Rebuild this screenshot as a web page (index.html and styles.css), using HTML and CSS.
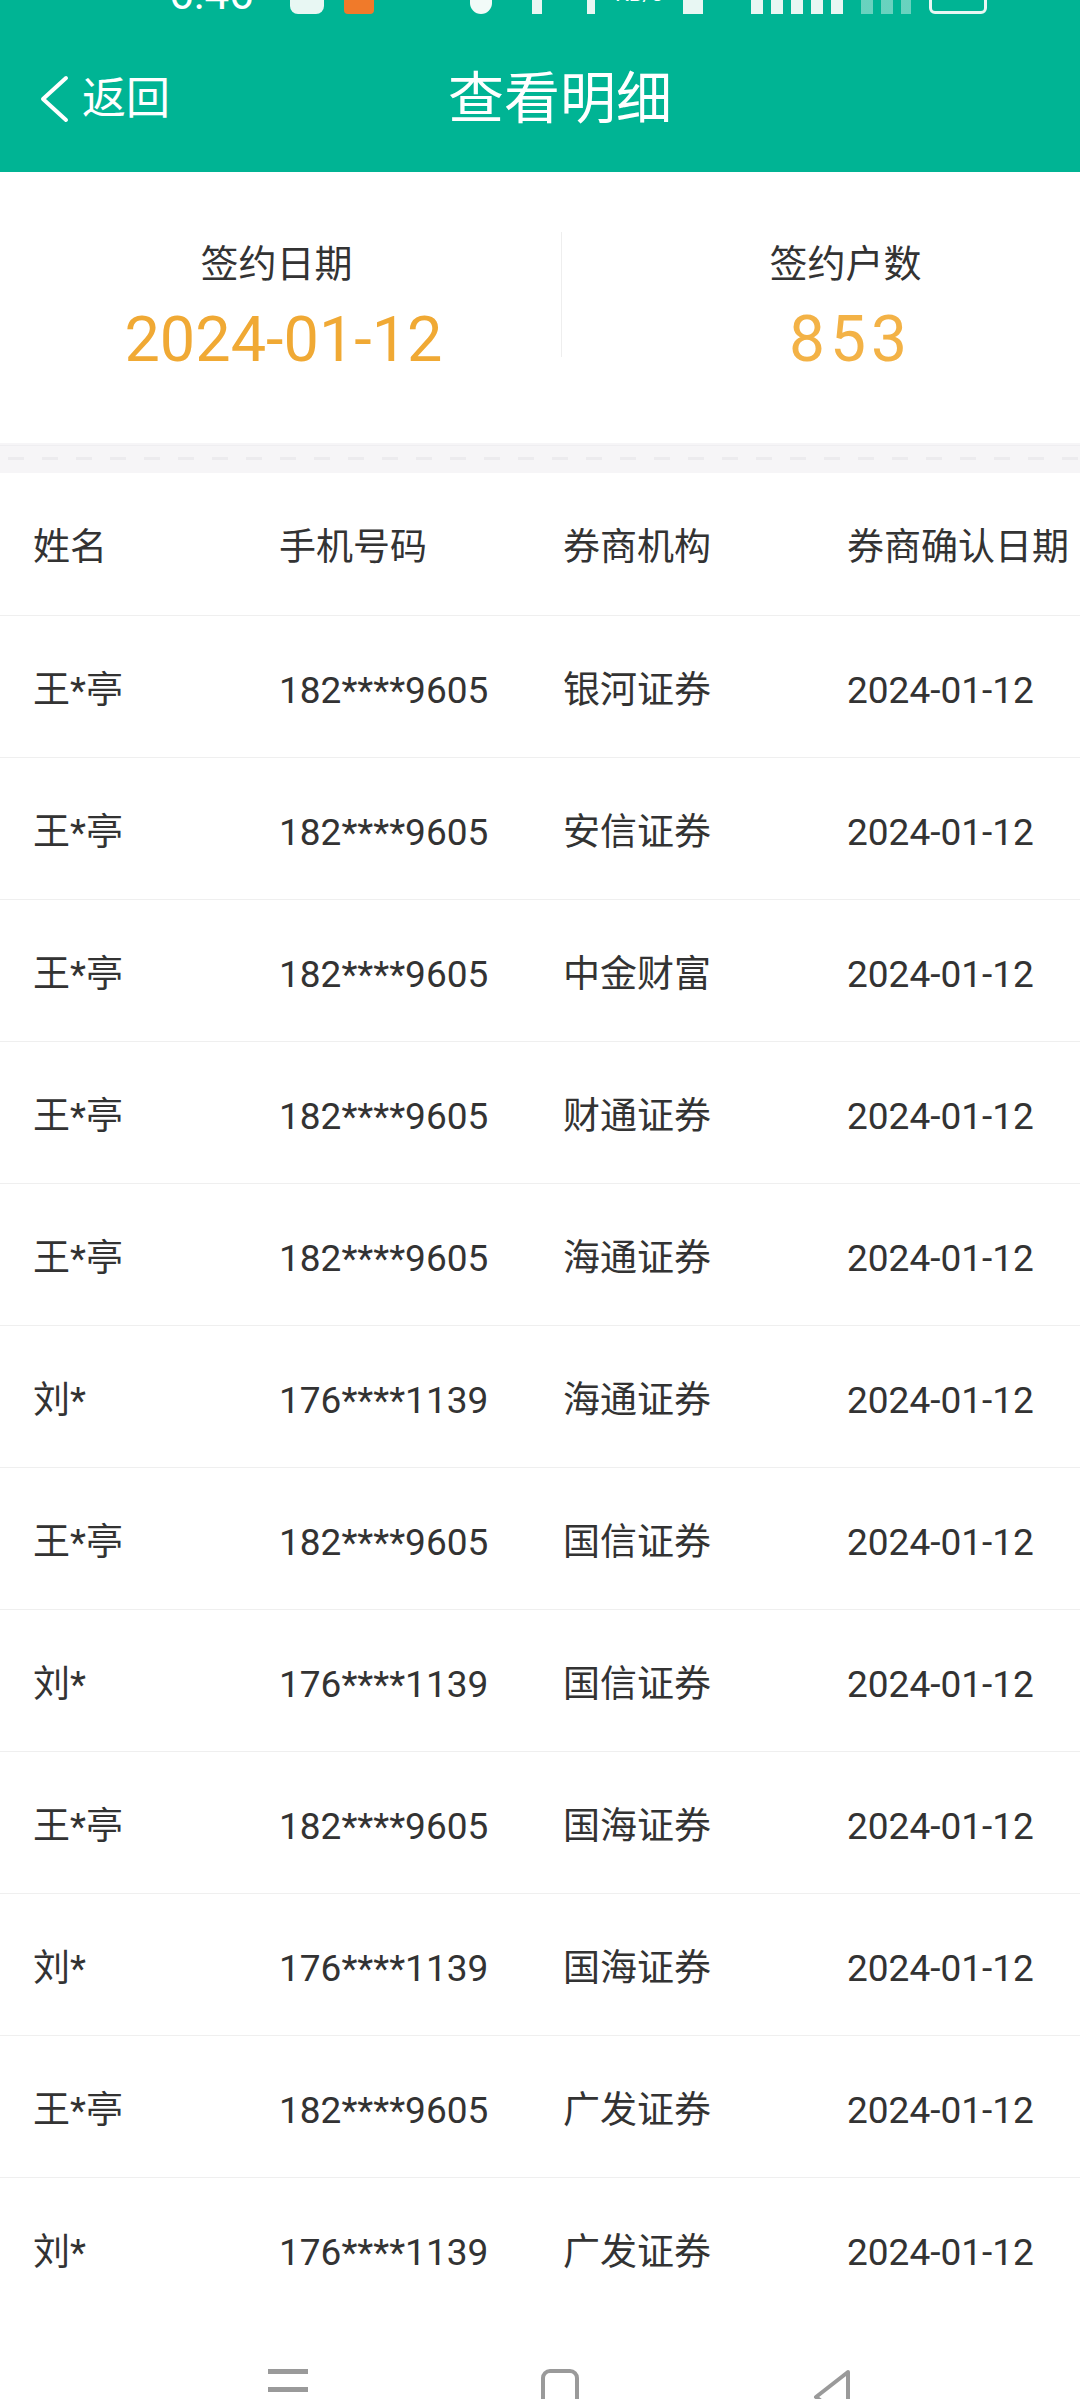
FILE: index.html
```html
<!DOCTYPE html>
<html lang="zh-CN">
<head>
<meta charset="utf-8">
<title>查看明细</title>
<link rel="stylesheet" href="styles.css">
</head>
<body>
<div class="page">
  <header class="topbar">
    <div class="status">
      <span class="time">6:46</span>
      <span class="sb-icon sb-white sb-round"></span>
      <span class="sb-icon sb-orange"></span>
      <span class="sb-gap"></span>
      <span class="sb-icon sb-dot"></span>
      <span class="sb-icon sb-thin"></span>
      <span class="sb-icon sb-thin2"></span>
      <span class="sb-kb">KB/s</span>
      <span class="sb-icon sb-rect"></span>
      <span class="sb-icon sb-bars"></span>
      <span class="sb-icon sb-bars sb-faint"></span>
      <span class="sb-icon sb-batt"></span>
    </div>
    <nav class="nav">
      <div class="back">
        <svg class="chev" width="32" height="48" viewBox="0 0 32 48"><polyline points="28,3 5,24 28,45" fill="none" stroke="#fff" stroke-width="4" stroke-linecap="round" stroke-linejoin="round"/></svg>
        <span class="back-text">返回</span>
      </div>
      <h1 class="title">查看明细</h1>
      <div class="nav-right"></div>
    </nav>
  </header>

  <section class="summary">
    <div class="stat stat-left">
      <div class="stat-label">签约日期</div>
      <div class="stat-value">2024-01-12</div>
    </div>
    <div class="vline"></div>
    <div class="stat stat-right">
      <div class="stat-label">签约户数</div>
      <div class="stat-value stat-count">853</div>
    </div>
  </section>

  <div class="sep"></div>

  <section class="table">
    <div class="row head"><span>姓名</span><span>手机号码</span><span>券商机构</span><span>券商确认日期</span></div>
    <div class="row"><span>王*亭</span><span>182****9605</span><span>银河证券</span><span>2024-01-12</span></div>
    <div class="row"><span>王*亭</span><span>182****9605</span><span>安信证券</span><span>2024-01-12</span></div>
    <div class="row"><span>王*亭</span><span>182****9605</span><span>中金财富</span><span>2024-01-12</span></div>
    <div class="row"><span>王*亭</span><span>182****9605</span><span>财通证券</span><span>2024-01-12</span></div>
    <div class="row"><span>王*亭</span><span>182****9605</span><span>海通证券</span><span>2024-01-12</span></div>
    <div class="row"><span>刘*</span><span>176****1139</span><span>海通证券</span><span>2024-01-12</span></div>
    <div class="row"><span>王*亭</span><span>182****9605</span><span>国信证券</span><span>2024-01-12</span></div>
    <div class="row"><span>刘*</span><span>176****1139</span><span>国信证券</span><span>2024-01-12</span></div>
    <div class="row"><span>王*亭</span><span>182****9605</span><span>国海证券</span><span>2024-01-12</span></div>
    <div class="row"><span>刘*</span><span>176****1139</span><span>国海证券</span><span>2024-01-12</span></div>
    <div class="row"><span>王*亭</span><span>182****9605</span><span>广发证券</span><span>2024-01-12</span></div>
    <div class="row"><span>刘*</span><span>176****1139</span><span>广发证券</span><span>2024-01-12</span></div>
  </section>

  <footer class="sysnav">
    <div class="slot"><span class="ic-menu"></span></div>
    <div class="slot"><span class="ic-home"></span></div>
    <div class="slot">
      <svg class="ic-back" width="40" height="60" viewBox="0 0 40 60"><polygon points="36,3 4,28 36,53" fill="none" stroke="#9a9a9a" stroke-width="4" stroke-linejoin="round"/></svg>
    </div>
  </footer>
</div>
</body>
</html>
```

FILE: styles.css
```css
html, body {
  margin: 0;
  padding: 0;
  background: #ffffff;
  overflow: hidden;
}

.page {
  width: 1120px;
  font-family: Roboto, "Noto Sans CJK SC", "Noto Sans", sans-serif;
  color: #333333;
}

/* ---------- top bar ---------- */
.topbar {
  background: #00b494;
  height: 172px;
  display: flex;
  flex-direction: column;
}

.status {
  height: 14px;
  overflow: hidden;
  display: flex;
  align-items: flex-end;
  padding-left: 169px;
  color: #ffffff;
}

.time {
  font-size: 44px;
  line-height: 40px;
  height: 40px;
  width: 121px;
}

.sb-icon {
  display: block;
  height: 40px;
  margin-right: 20px;
}

.sb-white { width: 34px; background: #e8f7f3; }
.sb-round { border-radius: 8px; }
.sb-orange { width: 30px; background: #f07a2a; border-radius: 4px; }
.sb-gap { width: 76px; }
.sb-dot { width: 22px; background: #f2fbf8; border-radius: 11px; margin-right: 40px; }
.sb-thin { width: 10px; background: #e8f7f3; margin-right: 45px; }
.sb-thin2 { width: 8px; background: #e8f7f3; margin-right: 20px; }
.sb-kb {
  font-size: 22px;
  line-height: 40px;
  height: 40px;
  margin-right: 20px;
}
.sb-rect { width: 20px; background: #e8f7f3; margin-right: 48px; }
.sb-bars {
  width: 100px;
  background: repeating-linear-gradient(90deg, #e8f7f3 0 12px, transparent 12px 20px);
  margin-right: 10px;
}
.sb-faint { width: 50px; opacity: 0.45; margin-right: 18px; }
.sb-batt {
  width: 58px;
  border: 3px solid #e8f7f3;
  border-radius: 6px;
  box-sizing: border-box;
}

.nav {
  flex: 1;
  display: grid;
  grid-template-columns: 1fr auto 1fr;
  align-items: center;
  padding-top: 12px;
}

.back {
  display: flex;
  align-items: center;
  padding-left: 38px;
  color: #ffffff;
}

.chev { display: block; }

.back-text {
  font-size: 44px;
  line-height: 52px;
  margin-left: 12px;
}

.title {
  margin: 0;
  font-size: 56px;
  line-height: 66px;
  font-weight: 400;
  color: #ffffff;
}

/* ---------- summary ---------- */
.summary {
  display: flex;
  height: 271px;
  background: #ffffff;
}

.stat {
  flex: none;
  box-sizing: border-box;
  text-align: center;
  padding-top: 70px;
}

.stat-left {
  width: 561px;
  padding-left: 6px;
}

.stat-right {
  width: 558px;
  padding-left: 14px;
}

.stat-label {
  font-size: 38px;
  line-height: 44px;
  color: #333333;
}

.stat-left .stat-label {
  padding-right: 14px;
}

.stat-right .stat-label {
  padding-right: 5px;
}

.stat-value {
  margin-top: 18px;
  font-size: 63px;
  line-height: 72px;
  color: #f0a934;
}

.stat-count {
  font-size: 64px;
  letter-spacing: 5px;
  text-indent: 5px;
  color: #f3b246;
}

.vline {
  flex: none;
  width: 1px;
  height: 125px;
  margin-top: 60px;
  background: #eeeeee;
}

/* ---------- separator ---------- */
.sep {
  height: 30px;
  background:
    repeating-linear-gradient(90deg, #ecebee 0 16px, transparent 16px 34px) 8px 14px / 100% 3px no-repeat,
    linear-gradient(#efeef1, #efeef1) 0 2px / 100% 1px no-repeat,
    #f6f5f7;
}

/* ---------- table ---------- */
.row {
  display: grid;
  grid-template-columns: 246px 284px 284px 1fr;
  align-items: center;
  height: 142px;
  box-sizing: border-box;
  padding-left: 33px;
  padding-top: 8px;
  border-top: 1px solid #efefef;
  font-size: 37px;
  line-height: 44px;
  color: #333333;
  white-space: nowrap;
}

.row.head {
  border-top: none;
}

/* ---------- system nav ---------- */
.sysnav {
  height: 80px;
  display: flex;
  justify-content: center;
  padding-top: 50px;
  box-sizing: border-box;
  overflow: hidden;
}

.slot {
  width: 272px;
  display: flex;
  justify-content: center;
  align-items: flex-start;
}

.ic-menu {
  display: block;
  width: 40px;
  height: 5px;
  background: #9a9a9a;
  box-shadow: 0 18px 0 #9a9a9a, 0 36px 0 #9a9a9a;
}

.ic-home {
  display: block;
  width: 38px;
  height: 56px;
  border: 4px solid #9a9a9a;
  border-radius: 9px;
  box-sizing: border-box;
}

.ic-back { display: block; }
```
